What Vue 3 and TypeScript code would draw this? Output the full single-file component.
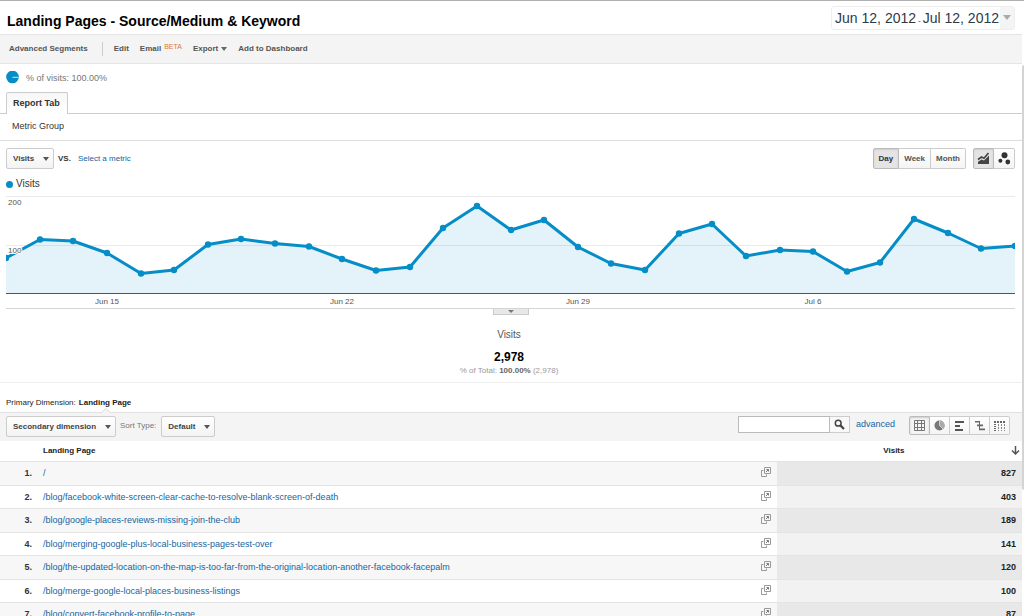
<script setup lang="ts">
import { computed, onBeforeUnmount, onMounted, ref } from 'vue'

interface PageRow {
  path: string
  visits: number
}

const rows: PageRow[] = [
  { path: '/', visits: 827 },
  { path: '/blog/facebook-white-screen-clear-cache-to-resolve-blank-screen-of-death', visits: 403 },
  { path: '/blog/google-places-reviews-missing-join-the-club', visits: 189 },
  { path: '/blog/merging-google-plus-local-business-pages-test-over', visits: 141 },
  { path: '/blog/the-updated-location-on-the-map-is-too-far-from-the-original-location-another-facebook-facepalm', visits: 120 },
  { path: '/blog/merge-google-local-places-business-listings', visits: 100 },
  { path: '/blog/convert-facebook-profile-to-page', visits: 87 },
]

const daily: number[] = [
  74, 112, 109, 85, 42, 50, 102, 113, 104, 98, 72, 48, 56, 136, 181, 132, 153, 97, 63, 49, 125, 144,
  78, 91, 88, 46, 65, 155, 126, 94, 99,
]

const ticks = [
  { day: 3, label: 'Jun 15' },
  { day: 10, label: 'Jun 22' },
  { day: 17, label: 'Jun 29' },
  { day: 24, label: 'Jul 6' },
]

const PLOT = 97
const MAX = 200

const chart = ref<HTMLElement | null>(null)
const width = ref(1008)
const period = ref('Day')
const chartKind = ref('line')
const view = ref('table')

const xOf = (day: number): number => Math.round((day * width.value) / (daily.length - 1))
const points = computed(() =>
  daily.map((v, i) => ({ x: xOf(i), y: Math.round((PLOT - (v / MAX) * PLOT) * 2) / 2 + 1 })),
)
const line = computed(() => points.value.map((p) => `${p.x},${p.y}`).join(' '))
const area = computed(() => `0,98 ${line.value} ${width.value},98`)

function measure(): void {
  if (chart.value) width.value = chart.value.clientWidth
}
onMounted(() => {
  measure()
  window.addEventListener('resize', measure)
})
onBeforeUnmount(() => window.removeEventListener('resize', measure))
</script>

<template>
  <div class="page">
    <header class="head">
      <h1>Landing Pages - Source/Medium &amp; Keyword</h1>
      <button class="dates" type="button">
        <span class="range">Jun 12, 2012<i>-</i>Jul 12, 2012</span>
        <span class="drop"><svg width="8" height="5" viewBox="0 0 8 5"><path d="M0 0h8L4 5z" fill="#aaa" /></svg></span>
      </button>
    </header>

    <nav class="toolbar">
      <button type="button" class="seg">Advanced Segments</button>
      <button type="button">Edit</button>
      <button type="button">Email <sup>BETA</sup></button>
      <button type="button">Export <svg width="6" height="4" viewBox="0 0 6 4"><path d="M0 0h6L3 4z" fill="#666" /></svg></button>
      <button type="button">Add to Dashboard</button>
    </nav>

    <div class="share">
      <svg width="14" height="14" viewBox="0 0 14 14"><circle cx="6.5" cy="6" r="6.3" fill="#058dc7" /><path d="M6.5 6.3h6" stroke="#cfe8f3" stroke-width="1" /></svg>
      <span>% of visits: 100.00%</span>
    </div>

    <div class="tabs" role="tablist">
      <button type="button" role="tab" aria-selected="true">Report Tab</button>
    </div>
    <div class="group">Metric Group</div>

    <section class="controls">
      <span class="select">
        <select aria-label="Metric"><option>Visits</option></select>
        <svg width="6" height="4" viewBox="0 0 6 4"><path d="M0 0h6L3 4z" fill="#555" /></svg>
      </span>
      <span class="vs">VS.</span>
      <a href="#">Select a metric</a>
      <div class="buttons periods">
        <button
          v-for="p in ['Day', 'Week', 'Month']"
          :key="p"
          type="button"
          :class="{ on: period === p }"
          :aria-pressed="period === p"
          @click="period = p"
        >{{ p }}</button>
      </div>
      <div class="buttons kinds">
        <button type="button" aria-label="Line chart" :class="{ on: chartKind === 'line' }" @click="chartKind = 'line'">
          <svg width="13" height="13" viewBox="0 0 13 13">
            <path d="M1 7.5L4.5 5l2.5 1.2L11.5 1" fill="none" stroke="#444" stroke-width="1.7" />
            <path d="M1 12V9.8L4.5 7.4 7 8.6l5-5V12z" fill="#444" />
          </svg>
        </button>
        <button type="button" aria-label="Motion chart" :class="{ on: chartKind === 'motion' }" @click="chartKind = 'motion'">
          <svg width="13" height="13" viewBox="0 0 13 13" fill="#333"><circle cx="6.5" cy="3.2" r="3" /><circle cx="2.4" cy="8.8" r="2" /><circle cx="9.8" cy="10" r="2.4" /></svg>
        </button>
      </div>
    </section>

    <section class="graph">
      <div class="legend"><svg width="7" height="7" viewBox="0 0 7 7"><circle cx="3.5" cy="3.5" r="3.5" fill="#058dc7" /></svg>Visits</div>
      <div ref="chart" class="chart">
        <svg :width="width" height="112" :viewBox="`0 0 ${width} 112`">
          <path :d="`M0 .5H${width}M0 49.5H${width}`" stroke="#eaeaea" />
          <polygon :points="area" fill="#058dc7" fill-opacity="0.11" />
          <polyline :points="line" fill="none" stroke="#058dc7" stroke-width="3" stroke-linejoin="round" />
          <circle v-for="p in points" :key="p.x" :cx="p.x" :cy="p.y" r="3.2" fill="#058dc7" />
          <path :d="`M0 97.5H${width}`" stroke="#4d5560" />
          <g class="scale"><text x="2" y="9">200</text><text x="2" y="57">100</text></g>
          <text v-for="t in ticks" :key="t.day" :x="xOf(t.day)" y="108" text-anchor="middle">{{ t.label }}</text>
        </svg>
      </div>
      <div class="fold">
        <button type="button" aria-label="Show annotations"><svg width="6" height="3" viewBox="0 0 6 3"><path d="M0 0h6L3 3z" fill="#777" /></svg></button>
      </div>
    </section>

    <section class="summary">
      <div class="name">Visits</div>
      <div class="total">2,978</div>
      <div class="part">% of Total: <b>100.00%</b> (2,978)</div>
    </section>

    <div class="dimension">
      <span>Primary Dimension:</span>
      <b>Landing Page<svg width="10" height="5" viewBox="0 0 10 5"><path d="M0 5l5-4.5L10 5" fill="#f4f4f4" stroke="#ddd" /></svg></b>
    </div>

    <div class="filters">
      <span class="select">
        <select aria-label="Secondary dimension"><option>Secondary dimension</option></select>
        <svg width="6" height="4" viewBox="0 0 6 4"><path d="M0 0h6L3 4z" fill="#555" /></svg>
      </span>
      <label for="sort">Sort Type:</label>
      <span class="select">
        <select id="sort"><option>Default</option></select>
        <svg width="6" height="4" viewBox="0 0 6 4"><path d="M0 0h6L3 4z" fill="#555" /></svg>
      </span>
      <form class="search" @submit.prevent>
        <input type="text" aria-label="Search table">
        <button type="submit" aria-label="Search">
          <svg width="11" height="11" viewBox="0 0 11 11" fill="none" stroke="#444"><circle cx="4.2" cy="4.2" r="2.9" stroke-width="1.5" /><path d="M6.4 6.4l3.6 3.6" stroke-width="2.2" /></svg>
        </button>
      </form>
      <a href="#">advanced</a>
      <div class="buttons views">
        <button type="button" aria-label="Table" :class="{ on: view === 'table' }" @click="view = 'table'">
          <svg width="11" height="11" viewBox="0 0 11 11" fill="none" stroke="#777"><path d="M.5 .5h10v10H.5zM.5 3.5h10M.5 7.5h10M3.5 .5v10M7.5 .5v10" /></svg>
        </button>
        <button type="button" aria-label="Percentage" :class="{ on: view === 'pie' }" @click="view = 'pie'">
          <svg width="11" height="11" viewBox="0 0 11 11"><circle cx="5.5" cy="5.5" r="5" fill="#777" /><path d="M5.5 .5v5l3.6 3.5A5 5 0 0 0 5.5 .5z" fill="#aaa" /><path d="M5.5 .5v5l3.5 3.5" stroke="#eee" stroke-width=".7" fill="none" /></svg>
        </button>
        <button type="button" aria-label="Performance" :class="{ on: view === 'bars' }" @click="view = 'bars'">
          <svg width="11" height="11" viewBox="0 0 11 11" fill="#555"><path d="M1 1h9v2H1zM1 5h5v2H1zM1 9h8v2H1z" /></svg>
        </button>
        <button type="button" aria-label="Comparison" :class="{ on: view === 'compare' }" @click="view = 'compare'">
          <svg width="11" height="11" viewBox="0 0 11 11" fill="#666"><path d="M1 1h5v1.6H1zM5 1h1v9H5zM3 4.6h6v1.6H3zM5 8.6h6v1.6H5z" /></svg>
        </button>
        <button type="button" aria-label="Pivot" :class="{ on: view === 'pivot' }" @click="view = 'pivot'">
          <svg width="12" height="10" viewBox="0 0 12 10" stroke="#666" fill="none"><path d="M0 1h12" stroke-width="2" stroke-dasharray="2 1" /><path d="M1 3v7" stroke-width="2" stroke-dasharray="1 1" /><path d="M4.5 3v7M7.5 3v7M10.5 3v7" stroke="#888" stroke-dasharray="2 1" /></svg>
        </button>
      </div>
    </div>

    <table>
      <colgroup><col class="c-rank"><col><col class="c-open"><col class="c-visits"></colgroup>
      <thead>
        <tr>
          <th></th>
          <th scope="col" class="left">Landing Page</th>
          <th></th>
          <th scope="col">
            <div class="sorted"><span>Visits</span><svg width="9" height="9" viewBox="0 0 9 9" fill="none" stroke="#555" stroke-width="1.5"><path d="M4.5 0v8M1 4.5L4.5 8 8 4.5" /></svg></div>
          </th>
        </tr>
      </thead>
      <tbody>
        <tr v-for="(row, i) in rows" :key="row.path">
          <td class="rank">{{ i + 1 }}.</td>
          <td><a href="#">{{ row.path }}</a></td>
          <td class="open">
            <a href="#" :aria-label="`Open ${row.path}`">
              <svg width="10" height="10" viewBox="0 0 10 10" fill="none" stroke="#999"><path d="M3.5 .5h6v6h-6z" /><path d="M2.5 3.5h-2v6h5v-2" /><path d="M5 5l2.5-2.5M5.5 2.5h2v2" stroke="#777" /></svg>
            </a>
          </td>
          <td class="count">{{ row.visits }}</td>
        </tr>
      </tbody>
    </table>
    <div class="scroll"></div>
  </div>
</template>

<style>
body {
  background: #fff;
}
</style>

<style scoped>
.page {
  height: 100vh;
  overflow: hidden;
  box-sizing: border-box;
  border-top: 1px solid #b0b0b0;
  padding-right: 2px;
  font: 8px/12px "Liberation Sans", Arial, sans-serif;
  color: #333;
}
* {
  box-sizing: border-box;
}
button,
select,
input {
  font: inherit;
  color: inherit;
  margin: 0;
  padding: 0;
  border: 0;
  background: none;
}
svg {
  display: block;
  flex: none;
}
a {
  color: #15659f;
  text-decoration: none;
}
.head {
  display: flex;
  justify-content: space-between;
  align-items: center;
  height: 33px;
  padding: 0 7px;
}
h1 {
  margin: 7px 0 0;
  font-size: 14px;
  line-height: 18px;
  color: #000;
}
.dates {
  display: flex;
  height: 24px;
  border: 1px solid #eee;
  border-radius: 3px;
  font-size: 14px;
  line-height: 22px;
  color: #2d3a48;
}
.range {
  padding: 0 1px 0 3px;
}
.range i {
  margin: 0 2px;
  font-size: 8px;
  font-style: normal;
}
.drop {
  display: flex;
  align-items: center;
  padding: 0 3px;
  background: #f4f4f4;
}
.toolbar {
  display: flex;
  align-items: center;
  gap: 11px;
  height: 30px;
  padding: 0 9px;
  border: solid #e5e5e5;
  border-width: 1px 0;
  background: #f4f4f4;
  font-weight: bold;
  color: #555;
}
.toolbar button {
  display: flex;
  align-items: center;
  gap: 3px;
  font-weight: bold;
}
.toolbar .seg {
  height: 14px;
  padding-right: 14px;
  border-right: 1px solid #ccc;
}
sup {
  padding-bottom: 4px;
  font-size: 7px;
  line-height: 8px;
  font-weight: normal;
  color: #e8762c;
}
.share {
  display: flex;
  align-items: center;
  gap: 6px;
  height: 28px;
  padding: 0 6px;
  font-size: 9px;
  color: #777;
}
.tabs {
  height: 22px;
  padding: 0 6px;
  border-bottom: 1px solid #ccc;
}
.tabs button {
  display: block;
  height: 22px;
  padding: 0 7px 2px 6px;
  border: 1px solid #ccc;
  border-bottom: 0;
  border-radius: 2px 2px 0 0;
  background: #fff linear-gradient(#f7f7f7, #fff);
  font-size: 9px;
  font-weight: bold;
}
.group {
  height: 27px;
  padding: 0 12px;
  border-bottom: 1px solid #ddd;
  font-size: 9px;
  line-height: 24px;
}
.controls {
  display: flex;
  align-items: center;
  padding: 7px 7px 0 6px;
}
.select {
  position: relative;
  display: flex;
}
.select select {
  appearance: none;
  height: 21px;
  padding: 0 18px 0 6px;
  border: 1px solid #ccc;
  border-radius: 2px;
  background: linear-gradient(#fff, #f3f3f3);
  font-weight: bold;
  color: #444;
}
.select svg {
  position: absolute;
  right: 5px;
  top: 9px;
  pointer-events: none;
}
.vs {
  margin: 0 7px 0 4px;
  font-weight: bold;
}
.buttons {
  display: flex;
}
.buttons button {
  display: flex;
  align-items: center;
  justify-content: center;
  height: 21px;
  border: 1px solid #ccc;
  background: linear-gradient(#fff, #f4f4f4);
  font-weight: bold;
  color: #555;
}
.buttons button + button {
  border-left: 0;
}
.buttons button:first-child {
  border-radius: 2px 0 0 2px;
}
.buttons button:last-child {
  border-radius: 0 2px 2px 0;
}
.buttons .on {
  border-color: #bbb;
  background: #e4e4e4;
  box-shadow: inset 0 1px 2px #ccc;
  color: #333;
}
.periods {
  margin-left: auto;
}
.periods button {
  padding: 0 5px;
}
.kinds {
  margin-left: 7px;
}
.kinds button {
  width: 21px;
}
.graph {
  padding: 0 7px 0 6px;
}
.legend {
  display: flex;
  align-items: center;
  gap: 3px;
  height: 27px;
  padding-top: 3px;
  font-size: 10px;
}
.chart {
  height: 112px;
  overflow: hidden;
}
.chart text {
  fill: #555;
}
.scale text {
  stroke: #fff;
  stroke-width: 2px;
  paint-order: stroke;
}
.fold {
  display: flex;
  justify-content: center;
  border-top: 1px solid #d5d5d5;
}
.fold button {
  display: flex;
  justify-content: center;
  width: 36px;
  height: 6px;
  padding-top: 1px;
  border: 1px solid #ccc;
  border-top: 0;
  background: #e8e8e8;
}
.summary {
  height: 68px;
  padding: 13px 4px 0 0;
  border-bottom: 1px solid #eee;
  text-align: center;
}
.name {
  font-size: 10px;
  line-height: 14px;
  color: #555;
}
.total {
  margin-top: 7px;
  font-size: 12px;
  line-height: 16px;
  font-weight: bold;
  color: #000;
}
.part {
  color: #999;
}
.part b {
  color: #666;
}
.dimension {
  display: flex;
  gap: 3px;
  height: 29px;
  padding: 14px 6px 0;
  color: #222;
}
.dimension b {
  position: relative;
}
.dimension svg {
  position: absolute;
  left: 22px;
  bottom: -1px;
}
.filters {
  display: flex;
  align-items: flex-start;
  height: 29px;
  padding: 3px 12px 0 6px;
  border-top: 1px solid #e2e2e2;
  background: #f4f4f4;
}
.filters label {
  margin: 0 5px 0 4px;
  line-height: 20px;
  color: #777;
}
.search {
  display: flex;
  margin-left: auto;
  height: 17px;
}
.search input {
  width: 92px;
  border: 1px solid #bbb;
  background: #fff;
}
.search button {
  display: flex;
  align-items: center;
  justify-content: center;
  width: 20px;
  border: 1px solid #ccc;
  border-left: 0;
  background: #f8f8f8;
}
.filters > a {
  margin: 0 14px 0 6px;
  font-size: 9px;
  line-height: 17px;
}
.views button {
  width: 20px;
  height: 19px;
}
.views button:first-child {
  width: 21px;
}
.views .on {
  background: #f4f4f4;
}
table {
  width: 100%;
  table-layout: fixed;
  border-collapse: collapse;
}
.c-rank {
  width: 43px;
}
.c-open {
  width: 22px;
}
.c-visits {
  width: 24%;
}
th,
td {
  padding: 0;
  white-space: nowrap;
}
th {
  height: 20px;
  color: #222;
}
.left {
  text-align: left;
}
.sorted {
  display: flex;
  align-items: center;
}
.sorted span {
  flex: 1;
}
.sorted svg {
  margin-right: 2px;
}
tbody tr {
  height: 23px;
  border-top: 1px solid #e4e4e4;
  font-size: 9px;
}
tbody tr:nth-child(odd) {
  height: 24px;
  background: #f7f7f7;
}
.rank {
  padding-right: 11px;
  text-align: right;
  font-weight: bold;
}
.open svg {
  margin: 0 0 2px 6px;
}
.count {
  padding-right: 6px;
  background: #f2f2f2;
  text-align: right;
  font-weight: bold;
  color: #222;
}
tr:nth-child(odd) .count {
  background: #e8e8e8;
}
.scroll {
  position: fixed;
  top: 65px;
  right: 0;
  width: 2px;
  height: 425px;
  border-radius: 2px 0 0 2px;
  background: #d4d4d4;
}
</style>
